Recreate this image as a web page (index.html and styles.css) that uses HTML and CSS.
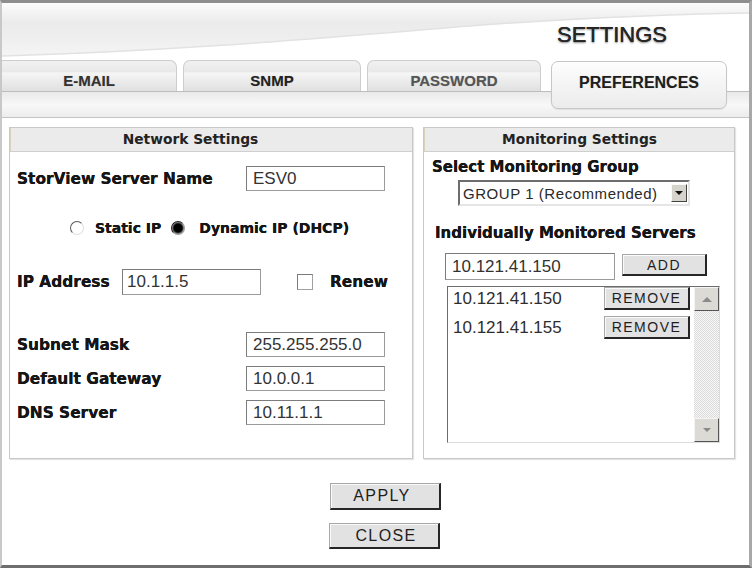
FILE: index.html
```html
<!DOCTYPE html>
<html>
<head>
    <title>Settings</title>
    <link rel="stylesheet" href="styles.css">
</head>
<body>
    <div class="frame">
        <div class="header">
            <svg class="swoosh" width="747" height="57" viewBox="0 0 747 57" preserveAspectRatio="none">
                <path d="M0,53 C180,48 330,34 480,22 C580,15 680,11 747,10 L747,57 L0,57 Z" fill="#ffffff"/>
                <path d="M0,53 C180,48 330,34 480,22 C580,15 680,11 747,10" fill="none" stroke="#e2e2e2" stroke-width="1.5"/>
            </svg>
            <h1 class="title">SETTINGS</h1>
        </div>

        <div class="tabbar">
            <div class="tab tab-email">E-MAIL</div>
            <div class="tab tab-snmp">SNMP</div>
            <div class="tab tab-password">PASSWORD</div>
            <div class="tab tab-prefs active">PREFERENCES</div>
        </div>

        <div class="content">
            <div class="panels">
                <section class="panel network">
                    <div class="panel-title">Network Settings</div>
                    <div class="panel-body">
                        <div class="field-row name-row">
                            <label>StorView Server Name</label>
                            <input class="textbox" type="text" value="ESV0">
                        </div>
                        <div class="radio-row">
                            <span class="radio"></span>
                            <span class="radio-label">Static IP</span>
                            <span class="radio checked"></span>
                            <span class="radio-label">Dynamic IP (DHCP)</span>
                        </div>
                        <div class="ip-row">
                            <label>IP Address</label>
                            <input class="textbox" type="text" value="10.1.1.5">
                            <span class="checkbox"></span>
                            <span class="check-label">Renew</span>
                        </div>
                        <div class="field-row subnet-row">
                            <label>Subnet Mask</label>
                            <input class="textbox" type="text" value="255.255.255.0">
                        </div>
                        <div class="field-row">
                            <label>Default Gateway</label>
                            <input class="textbox" type="text" value="10.0.0.1">
                        </div>
                        <div class="field-row">
                            <label>DNS Server</label>
                            <input class="textbox" type="text" value="10.11.1.1">
                        </div>
                    </div>
                </section>

                <section class="panel monitoring">
                    <div class="panel-title">Monitoring Settings</div>
                    <div class="panel-body">
                        <div class="mon-label">Select Monitoring Group</div>
                        <div class="dropdown">
                            <span class="dropdown-text">GROUP 1 (Recommended)</span>
                            <span class="dropdown-btn"><span class="arrow-down"></span></span>
                        </div>
                        <div class="mon-label servers-label">Individually Monitored Servers</div>
                        <div class="add-row">
                            <input class="textbox server-input" type="text" value="10.121.41.150">
                            <button class="btn small-btn add-btn">ADD</button>
                        </div>
                        <div class="listbox">
                            <div class="list-items">
                                <div class="list-item">
                                    <span>10.121.41.150</span>
                                    <button class="btn small-btn remove-btn">REMOVE</button>
                                </div>
                                <div class="list-item">
                                    <span>10.121.41.155</span>
                                    <button class="btn small-btn remove-btn">REMOVE</button>
                                </div>
                            </div>
                            <div class="scrollbar">
                                <div class="scroll-btn"><span class="arrow-up"></span></div>
                                <div class="scroll-track"></div>
                                <div class="scroll-btn"><span class="arrow-down grey"></span></div>
                            </div>
                        </div>
                    </div>
                </section>
            </div>

            <div class="actions">
                <button class="btn big-btn">APPLY</button>
                <button class="btn big-btn close-btn">CLOSE</button>
            </div>
        </div>
    </div>
</body>
</html>
```

FILE: styles.css
```css
body {
    margin: 0;
    background: #fff;
}
.frame {
    width: 752px;
    height: 568px;
    box-sizing: border-box;
    border-top: 3px solid #8e8e8e;
    border-left: 2px solid #c8c8c8;
    border-right: 3px solid #a8a8a8;
    border-bottom: 3px solid #6e6e6e;
    background: #fff;
    overflow: hidden;
    font-family: "DejaVu Sans", sans-serif;
    color: #1c1c1c;
}

/* header */
.header {
    position: relative;
    height: 57px;
    display: flex;
    justify-content: flex-end;
    align-items: center;
    padding: 7px 82px 0 0;
    box-sizing: border-box;
    background: linear-gradient(#fcfcfc, #ebebeb 35%, #eeeeee 60%, #f6f6f6);
}
.swoosh {
    position: absolute;
    left: 0;
    top: 0;
}
.title {
    position: relative;
    margin: 0;
    font-family: "Liberation Sans", Arial, sans-serif;
    font-size: 22px;
    font-weight: normal;
    color: #262626;
    text-shadow: 0 0 0.6px #222, 0 1px 2px rgba(0, 0, 0, 0.5);
}

/* tabs */
.tabbar {
    height: 58px;
    box-sizing: border-box;
    display: flex;
    align-items: flex-start;
    border-bottom: 1px solid #c4c4c4;
    background: linear-gradient(to bottom, #fff 0, #fff 31px, #bdbdbd 31px, #bdbdbd 32px, #e9e9e9 32px, #f8f8f8 45px, #ececec 57px);
}
.tab {
    height: 31px;
    box-sizing: border-box;
    border: 1px solid #cdcdcd;
    border-bottom: none;
    border-radius: 7px 7px 0 0;
    background: linear-gradient(#f1f1f1, #e9e9e9 35%, #f5f5f5 40%, #e0e0e0);
    font-family: "Liberation Sans", Arial, sans-serif;
    font-size: 15px;
    font-weight: bold;
    color: #333;
    text-align: center;
    padding-top: 11px;
    text-shadow: 0 0 1px rgba(0, 0, 0, 0.25);
}
.tab-email {
    width: 175px;
    border-left: none;
    border-top-left-radius: 0;
}
.tab-snmp {
    width: 178px;
    margin-left: 6px;
    color: #222;
}
.tab-password {
    width: 174px;
    margin-left: 6px;
    color: #555;
}
.tab.active {
    width: 176px;
    height: 48px;
    margin: 1px 0 0 10px;
    border: 1px solid #c6c6c6;
    border-radius: 7px;
    background: linear-gradient(#fefefe, #f4f4f4 50%, #ececec);
    color: #1e1e1e;
    font-size: 16px;
    padding-top: 12px;
    box-shadow: 0 1px 1px rgba(0, 0, 0, 0.08);
}

/* content */
.content {
    padding: 9px 0 0 7px;
}
.panels {
    display: flex;
    gap: 10px;
}
.panel {
    height: 332px;
    box-sizing: border-box;
    border: 1px solid #c8c8c8;
    box-shadow: 1px 1px 1px #e4e4e4;
}
.network {
    width: 404px;
}
.monitoring {
    width: 312px;
}
.panel-title {
    height: 23px;
    line-height: 23px;
    background: #ebebeb;
    border-bottom: 1px solid #cfcfcf;
    border-left: 1px solid #d9d2bc;
    text-align: center;
    font-size: 13.8px;
    font-weight: bold;
    color: #232323;
}
.network .panel-title {
    padding-right: 42px;
}
.panel-body {
    padding: 0 0 0 7px;
}

label, .radio-label, .check-label, .mon-label {
    font-size: 15.4px;
    font-weight: bold;
    color: #161616;
    text-shadow: 0 0 0.4px #000;
}
.textbox {
    height: 25px;
    box-sizing: border-box;
    border: 1px solid #9b9b9b;
    border-top-color: #7c7c7c;
    border-left-color: #7c7c7c;
    padding: 0 6px;
    font-family: "Liberation Sans", Arial, sans-serif;
    font-size: 17px;
    color: #333;
    background: #fff;
    outline: none;
}

.field-row {
    display: flex;
    align-items: center;
    justify-content: space-between;
    padding-right: 27px;
    margin-top: 9px;
}
.field-row .textbox {
    width: 139px;
}
.name-row {
    margin-top: 14px;
}
.subnet-row {
    margin-top: 37px;
}

.radio-row {
    display: flex;
    align-items: center;
    justify-content: center;
    height: 20px;
    margin-top: 27px;
    padding-right: 10px;
}
.radio {
    width: 12px;
    height: 12px;
    border-radius: 50%;
    border: 1px solid;
    border-color: #5a5a5a #e0e0e0 #e0e0e0 #5a5a5a;
    background: #fff;
    margin-right: 11px;
}
.radio.checked {
    margin-left: 10px;
    margin-right: 14px;
    border-color: #222 #999 #999 #222;
    background: radial-gradient(circle, #000 0, #000 4px, #444 5px, #ddd 6.5px);
}
.radio-label {
    font-size: 14px;
}

.ip-row {
    display: flex;
    align-items: center;
    margin-top: 31px;
}
.ip-row label {
    width: 105px;
}
.ip-row .textbox {
    width: 139px;
    height: 26px;
    padding-left: 4px;
}
.checkbox {
    width: 16px;
    height: 16px;
    box-sizing: border-box;
    border: 1px solid #a0a0a0;
    border-top-color: #7a7a7a;
    border-left-color: #7a7a7a;
    background: #fff;
    margin-left: 36px;
}
.check-label {
    margin-left: 17px;
}

/* monitoring */
.monitoring .panel-body {
    padding-left: 8px;
}
.mon-label {
    margin-top: 6px;
    line-height: 18px;
    font-size: 15px;
}
.dropdown {
    width: 232px;
    height: 26px;
    box-sizing: border-box;
    margin: 4px 0 0 26px;
    display: flex;
    align-items: center;
    justify-content: space-between;
    border: 2px solid;
    border-color: #6d6d6d #e6e6e6 #e6e6e6 #6d6d6d;
    background: #fff;
    padding: 0 1px 0 3px;
}
.dropdown-text {
    font-family: "Liberation Sans", Arial, sans-serif;
    font-size: 15px;
    letter-spacing: 0.55px;
    color: #2a2a2a;
}
.dropdown-btn {
    width: 16px;
    height: 18px;
    box-sizing: border-box;
    border: 1px solid;
    border-color: #fafafa #444 #444 #fafafa;
    background: #d6d3cc;
    display: flex;
    align-items: center;
    justify-content: center;
}
.arrow-down {
    width: 0;
    height: 0;
    border-left: 4px solid transparent;
    border-right: 4px solid transparent;
    border-top: 4px solid #111;
}
.arrow-down.grey {
    border-top-color: #8a8a8a;
}
.arrow-up {
    width: 0;
    height: 0;
    border-left: 5px solid transparent;
    border-right: 5px solid transparent;
    border-bottom: 5px solid #8a8a8a;
}
.servers-label {
    margin: 18px 0 0 3px;
}
.add-row {
    display: flex;
    align-items: flex-start;
    margin: 11px 0 0 13px;
}
.server-input {
    width: 170px;
    height: 27px;
}

.btn {
    box-sizing: border-box;
    background: #e2e2e2;
    border: 1px solid #a8a8a8;
    border-right: 2px solid #262626;
    border-bottom: 2px solid #262626;
    box-shadow: inset 1px 1px #fafafa;
    font-family: "Liberation Sans", Arial, sans-serif;
    color: #1e1e1e;
    padding: 0;
    cursor: pointer;
}
.small-btn {
    font-size: 14px;
    letter-spacing: 1.5px;
}
.add-btn {
    width: 85px;
    height: 22px;
    margin: 1px 0 0 7px;
}

.listbox {
    width: 273px;
    height: 157px;
    box-sizing: border-box;
    margin: 6px 0 0 15px;
    display: flex;
    border: 1px solid;
    border-color: #6c6c6c #dcdcdc #dcdcdc #6c6c6c;
    background: #fff;
}
.list-items {
    flex: 1;
    padding: 0 4px 0 5px;
}
.list-item {
    display: flex;
    align-items: center;
    justify-content: space-between;
    height: 23px;
    margin-bottom: 6px;
    font-family: "Liberation Sans", Arial, sans-serif;
    font-size: 17px;
    color: #2e2e2e;
}
.remove-btn {
    width: 86px;
    height: 23px;
}
.scrollbar {
    width: 25px;
    display: flex;
    flex-direction: column;
}
.scroll-btn {
    height: 24px;
    box-sizing: border-box;
    border: 1px solid;
    border-color: #f4f4f4 #555 #555 #f4f4f4;
    background: #dcdad4;
    display: flex;
    align-items: center;
    justify-content: center;
}
.scroll-track {
    flex: 1;
    background: repeating-conic-gradient(#dcdcdc 0 25%, #f6f6f6 0 50%) 0 0 / 2px 2px;
}

/* actions */
.actions {
    display: flex;
    flex-direction: column;
    align-items: flex-start;
    gap: 13px;
    margin-top: 24px;
    padding-left: 321px;
}
.big-btn {
    width: 111px;
    height: 27px;
    font-size: 16px;
    letter-spacing: 1.4px;
    padding-right: 6px;
}
.close-btn {
    height: 26px;
    margin-left: -1px;
    padding: 0 0 0 4px;
}
```
